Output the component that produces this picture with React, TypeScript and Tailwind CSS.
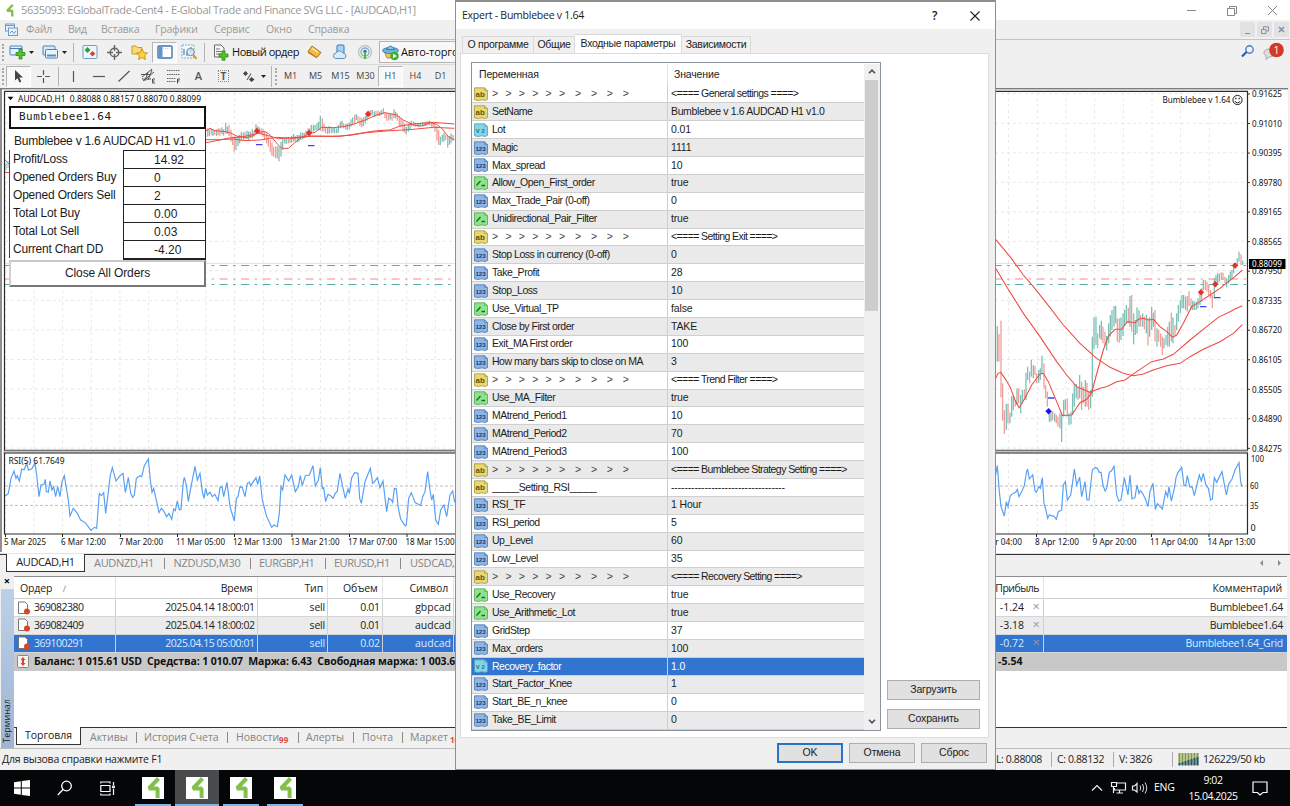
import type { ReactNode } from "react";
import clsx from "clsx";

type ParamKind = "ab" | "num" | "dbl" | "bool";

const ARROWS = "> > > > > > > > > >";

const PARAMS: [ParamKind, string, string][] = [
  ["ab", ARROWS, "<==== General settings ====>"],
  ["ab", "SetName", "Bumblebee v 1.6 AUDCAD H1 v1.0"],
  ["dbl", "Lot", "0.01"],
  ["num", "Magic", "1111"],
  ["num", "Max_spread", "10"],
  ["bool", "Allow_Open_First_order", "true"],
  ["num", "Max_Trade_Pair (0-off)", "0"],
  ["bool", "Unidirectional_Pair_Filter", "true"],
  ["ab", ARROWS, "<==== Setting Exit ====>"],
  ["num", "Stop Loss in currency (0-off)", "0"],
  ["num", "Take_Profit", "28"],
  ["num", "Stop_Loss", "10"],
  ["bool", "Use_Virtual_TP", "false"],
  ["num", "Close by First order", "TAKE"],
  ["num", "Exit_MA First order", "100"],
  ["num", "How many bars skip to close on MA", "3"],
  ["ab", ARROWS, "<==== Trend Filter ====>"],
  ["bool", "Use_MA_Filter", "true"],
  ["num", "MAtrend_Period1", "10"],
  ["num", "MAtrend_Period2", "70"],
  ["num", "MAtrend_Period3", "100"],
  ["ab", ARROWS, "<==== Bumblebee Strategy Setting ====>"],
  ["ab", "_____Setting_RSI_____", "----------------------------------"],
  ["num", "RSI_TF", "1 Hour"],
  ["num", "RSI_period", "5"],
  ["num", "Up_Level", "60"],
  ["num", "Low_Level", "35"],
  ["ab", ARROWS, "<==== Recovery Setting ====>"],
  ["bool", "Use_Recovery", "true"],
  ["bool", "Use_Arithmetic_Lot", "true"],
  ["num", "GridStep", "37"],
  ["num", "Max_orders", "100"],
  ["dbl", "Recovery_factor", "1.0"],
  ["num", "Start_Factor_Knee", "1"],
  ["num", "Start_BE_n_knee", "0"],
  ["num", "Take_BE_Limit", "0"],
];

const SELECTED_PARAM = 32;

const ORDERS = [
  { id: "369082380", time: "2025.04.14 18:00:01", lot: "0.01", symbol: "gbpcad", profit: "-1.24", comment: "Bumblebee1.64" },
  { id: "369082409", time: "2025.04.14 18:00:02", lot: "0.01", symbol: "audcad", profit: "-3.18", comment: "Bumblebee1.64" },
  { id: "369100291", time: "2025.04.15 05:00:01", lot: "0.02", symbol: "audcad", profit: "-0.72", comment: "Bumblebee1.64_Grid" },
];

const STATS = [
  ["Profit/Loss", "14.92"],
  ["Opened Orders Buy", "0"],
  ["Opened Orders Sell", "2"],
  ["Total Lot Buy", "0.00"],
  ["Total Lot Sell", "0.03"],
  ["Current Chart DD", "-4.20"],
];

const PRICES = ["0.91625", "0.91010", "0.90395", "0.89780", "0.89165", "0.88565", "0.87950", "0.87335", "0.86720", "0.86105", "0.85505", "0.84890", "0.84275"];

// bars are "x high low" in thirds of a pixel, r = falling, t = rising
const BARS_LEFT =
  "r23 115 140,t28 118 138,r34 115 135,t39 118 138,r44 120 135,t50 118 138,r55 115 135,r60 115 138,t66 112 133,t71 118 137,t77 98 130,t82 110 132,r87 105 138,r93 120 155,r98 140 165,r103 140 185,t108 140 180,t114 138 168,t119 135 160,t124 125 150,t130 128 150,r135 125 148,t141 122 148,t146 125 150,t151 125 145,t157 118 145,r162 125 140,t168 103 120,r173 108 128,t178 112 130,r184 115 132,r189 118 140,r194 125 150,r200 130 160,r205 140 170,r211 150 185,r216 158 198,r221 170 200,r227 170 205,r232 168 205,t237 170 214,t243 155 200,t248 145 180,t254 145 160,t259 145 162,r265 140 160,t270 145 158,t275 138 158,t281 132 155,r286 138 155,t292 135 157,t297 135 155,t302 127 150,t308 128 148,r313 128 145,t318 122 140,r324 115 135,t329 115 140,t334 105 130,t340 105 125,t345 105 122,t351 100 120,t356 95 120,t361 77 122,r367 85 125,r372 102 125,r377 110 130,t383 112 132,t388 108 130,r394 112 130,t399 112 128,t404 112 130,t410 115 130,t415 105 128,t421 95 115,t426 92 112,r431 100 115,r437 102 118,t442 100 120,t448 98 118,t453 88 110,t458 82 105,r464 75 100,t469 72 90,r474 78 98,r480 82 108,r485 85 112,t490 82 108,t496 78 100,t501 70 92,t507 62 80,r512 60 78,t517 60 75,t523 64 80,r528 62 80,r534 62 78,t539 65 78,t544 60 75,t550 55 72,r555 68 85,r560 70 92,r566 72 92,t571 70 88,r576 72 92,t582 58 85,t587 65 85,r592 70 92,r598 78 108,r603 85 112,r609 90 125,r614 100 128,t619 110 133,t625 102 125,t630 95 118,r635 92 110,t641 95 108,r646 98 110,t652 98 110,r657 100 112,t662 98 108,t668 96 110,r673 96 108,t678 95 108,r684 93 105,t689 92 106,r695 96 110,r700 98 112,r705 100 125,r711 108 152,r716 120 165,t721 140 165,t727 135 155,t732 128 155,r737 135 150,r743 135 173,t748 138 165,t753 130 160,t759 135 152";

const BARS_RIGHT =
  "t22 288 395,r27 312 395,r33 272 502,r38 460 572,r43 540 612,t49 522 600,r54 520 580,t60 548 580,t65 498 560,t70 498 540,r76 510 530,t81 475 525,r86 475 520,t92 495 550,t97 480 520,r103 478 510,t108 428 510,t113 410 450,r119 425 460,t124 390 440,t130 405 445,r135 408 435,r140 430 460,t146 420 458,t151 415 450,t156 377 430,r162 400 475,r167 465 505,r172 485 530,t178 540 575,t183 545 575,r188 543 570,t194 550 575,r199 555 580,r204 560 590,t210 550 595,t215 555 636,t221 510 560,t226 508 540,r232 505 560,t237 550 585,t243 545 583,t248 490 555,t253 463 530,t259 462 505,r264 470 510,t269 435 505,r275 455 540,r280 470 520,t286 450 530,r291 458 530,r296 485 540,t302 480 535,t307 320 500,t312 262 358,t318 260 345,r323 310 355,t329 285 325,t334 272 330,r339 290 340,r345 305 345,t350 318 362,t356 280 340,t361 255 320,t366 240 300,t372 228 290,t377 228 280,r382 265 335,r388 265 338,t393 262 330,t399 250 318,t404 240 285,t409 225 275,r415 233 280,t420 198 290,r425 195 305,t431 250 343,t436 270 315,t441 232 310,t447 240 290,r452 255 290,t458 250 290,r463 260 298,t469 255 310,r474 265 347,t479 262 320,t485 230 300,t490 248 290,r495 240 335,t501 295 350,r506 300 335,r512 310 350,r517 320 375,t522 325 355,t528 315 345,r533 290 350,t538 275 350,r544 248 335,t549 262 340,r555 285 315,t560 250 300,t565 225 275,t571 210 250,t576 195 235,t581 195 235,t587 200 240,r592 198 245,r597 183 228,r603 205 238,t608 212 240,t613 215 240,t619 215 240,t624 205 235,t630 190 225,r635 175 215,t640 150 180,r646 150 180,r651 155 185,r656 165 195,r662 180 205,r667 195 235,t673 145 205,t678 135 170,t683 130 165,t688 130 155,r694 127 150,r699 128 150,r705 140 160,t710 145 172,t716 135 160,t721 125 150,t726 120 145,t731 110 130,t737 100 115,t742 85 105,t747 65 95,r753 73 105,t758 92 105";

const MA_LEFT = [
  "18,122 30,115 45,122 75,125 90,128 110,138 140,143 160,137 175,127 195,125 205,130 235,165 245,175 265,175 280,162 300,145 330,130 345,127 365,112 400,113 430,110 460,103 495,90 530,75 555,68 590,75 610,90 640,105 665,108 690,98 710,103 725,115 745,140 763,150",
  "18,149 60,149 100,147 130,152 180,150 230,142 280,145 320,140 325,138 420,139 460,133 530,122 570,120 600,108 640,102 700,97 763,102",
  "18,158 60,150 80,145 130,140 175,130 205,137 235,146 280,143 330,139 400,139 450,136 500,128 560,123 640,118 700,112 763,115",
];

const MA_RIGHT = [
  "17,28 60,80 100,135 130,170 170,220 220,285 270,340 320,385 360,412 400,430 430,437 460,432 490,420 530,407 570,400 600,380 640,358 690,335 730,310 757,284",
  "17,115 50,170 100,250 150,320 200,395 230,435 260,470 300,487 330,475 350,470 380,455 405,450 440,425 485,395 520,387 550,373 600,330 650,290 685,262 720,245 735,237 757,227",
  "17,445 24,430 32,427 45,445 60,470 75,510 87,533 105,505 125,465 150,432 160,430 175,455 200,515 217,556 245,555 270,518 290,508 305,488 315,450 340,360 355,318 375,298 395,298 412,275 425,277 435,278 445,268 460,265 475,270 490,268 510,290 530,305 548,322 560,315 580,280 605,230 630,215 660,195 690,175 715,155 735,140 757,120",
];

const RSI_LEFT =
  "16,153 25,145 33,100 42,78 48,100 52,92 58,108 65,72 72,75 80,55 85,75 95,72 105,55 110,90 117,155 123,120 132,118 136,103 139,140 145,142 150,108 156,135 161,125 167,155 173,125 180,155 186,110 193,92 200,135 205,165 210,213 220,190 232,205 242,225 255,232 273,256 283,247 290,250 298,145 304,152 311,143 317,205 325,140 331,90 337,68 348,108 360,92 369,85 376,142 385,97 392,145 398,157 403,150 409,100 420,92 425,95 433,62 445,42 451,105 456,142 461,130 470,170 477,203 484,190 492,200 500,215 507,205 515,223 521,192 526,197 532,168 538,195 543,193 550,110 553,97 559,120 565,170 572,130 585,64 592,105 600,85 607,140 612,160 617,130 622,150 630,142 637,155 645,148 654,167 660,128 666,125 671,155 681,112 690,185 703,228 709,160 714,155 720,125 727,128 735,155 742,115 748,112 752,122 768,98 773,118 779,93 787,165 800,215 815,247 822,240 832,245 838,205 843,125 848,135 855,90 866,108 875,90 886,140 895,125 901,92 907,122 916,92 928,90 939,62 946,123 955,105 961,68 967,130 971,128 977,170 984,148 992,152 999,160 1006,145 1012,138 1020,85 1028,125 1036,160 1044,132 1048,145 1055,98 1064,83 1074,85 1079,160 1084,175 1095,110 1103,90 1111,70 1118,115 1125,108 1132,98 1140,128 1149,108 1160,200 1166,160 1174,165 1178,172 1183,130 1189,132 1195,190 1202,222 1215,242 1219,240 1226,160 1234,143 1245,172 1262,182 1268,155 1275,140 1283,80 1290,135 1295,165 1300,148 1307,225 1315,238 1322,195 1332,180 1340,215 1350,150 1358,138 1364,172";

const RSI_RIGHT =
  "17,90 22,62 28,140 33,185 43,213 49,170 54,185 60,155 65,148 77,142 82,133 87,155 95,140 103,122 110,78 113,74 118,102 128,90 135,138 139,142 147,124 151,130 157,98 162,175 167,192 173,220 178,210 192,214 199,223 205,200 215,195 220,120 226,110 232,165 242,150 248,110 253,72 260,120 269,97 275,155 285,110 291,165 297,165 307,75 315,68 322,70 328,82 333,82 339,120 345,138 350,130 358,82 364,78 372,64 380,150 386,168 393,165 403,98 414,150 420,90 426,162 435,158 441,120 447,145 451,137 458,145 466,162 474,185 480,140 489,115 496,193 502,176 517,192 527,140 533,155 537,125 544,168 553,130 558,98 564,82 575,67 582,122 587,122 592,92 599,125 607,127 613,152 620,122 628,90 634,108 640,85 647,118 655,130 662,165 667,162 673,98 680,112 696,80 709,150 716,118 726,102 735,75 747,53 752,110 755,122 758,122";

const DATES: [number, number, string][] = [
  [4, 42, "5 Mar 2025"],
  [61, 45, "6 Mar 12:00"],
  [119, 44, "7 Mar 20:00"],
  [176, 49, "11 Mar 05:00"],
  [233, 49, "12 Mar 13:00"],
  [290.5, 49, "13 Mar 21:00"],
  [348, 49, "17 Mar 07:00"],
  [405.5, 49, "18 Mar 15:00"],
  [978, 44, "7 Apr 04:00"],
  [1035, 44, "8 Apr 12:00"],
  [1092.5, 44, "9 Apr 20:00"],
  [1150, 48, "11 Apr 04:00"],
  [1207.5, 48, "14 Apr 13:00"],
];

function Bars({ data }: { data: string }) {
  return (
    <>
      {data.split(",").map((bar) => {
        const [x, high, low] = bar.slice(1).split(" ").map(Number);
        return <rect key={x} x={x - 2} y={high} width={3.9} height={low - high} fill={bar[0] === "r" ? "#ef9f99" : "#7cc0b8"} />;
      })}
    </>
  );
}

function Diamond({ x, y, color }: { x: number; y: number; color: string }) {
  return <path d={`M${x} ${y - 3.2}L${x + 3.2} ${y}L${x} ${y + 3.2}L${x - 3.2} ${y}Z`} fill={color} />;
}

function Chart() {
  const cols = Array.from({ length: 43 }, (_, i) => 5 + i * 28.667 + 0.3);
  return (
    <svg className="block" width="1290" height="466" viewBox="0 88 1290 466" fontFamily="'Noto Sans', sans-serif" fontSize="9">
      <rect x="0" y="88" width="1290" height="466" fill="#fff" />
      <rect x="0" y="88" width="2" height="464" fill="#8f8f8f" />
      <rect x="0" y="88" width="1288" height="1.4" fill="#7c7c7c" />
      <rect x="1288" y="88" width="2" height="466" fill="#efefef" />
      <g stroke="#e8e8e8" strokeWidth="1" strokeDasharray="3 3">
        {cols.map((x) => (
          <path key={x} d={`M${x} 92V533`} />
        ))}
        {PRICES.map((p, i) => (
          <path key={p} d={`M5 ${93.7 + i * 29.53}H1247`} />
        ))}
      </g>
      <path d="M5 486H1247M5 505.4H1247" stroke="#bdbdbd" strokeDasharray="3 2" fill="none" />
      <path d="M5 263.5H1247" stroke="#e3e3e8" fill="none" />
      <g fill="none" strokeWidth="1.2" strokeDasharray="8 5.5 2.5 5.5">
        <path d="M4.600 265.5H1247" stroke="#55aea2" />
        <path d="M4.600 279H1247" stroke="#ec8e89" />
        <path d="M4.600 284.5H1247" stroke="#55aea2" />
      </g>

      <g transform="translate(200 90) scale(.33333)">
        <Bars data={BARS_LEFT} />
        {MA_LEFT.map((p) => (
          <polyline key={p} points={p} fill="none" stroke="#ee4b42" strokeWidth="3" />
        ))}
      </g>
      <path d="M5 160L9 164M5 172.5H10" stroke="#ee4b42" fill="none" />
      <path d="M6 163V170M8 161V168" stroke="#7cc0b8" fill="none" />
      <Diamond x={257} y={131} color="#e33227" />
      <Diamond x={309} y={133} color="#e33227" />
      <Diamond x={368} y={114} color="#e33227" />
      <path d="M256 144.7H262.500M308 145.600H314.500" stroke="#4040f0" strokeWidth="1.3" fill="none" />

      <g transform="translate(990 230) scale(.33333)">
        <Bars data={BARS_RIGHT} />
        {MA_RIGHT.map((p) => (
          <polyline key={p} points={p} fill="none" stroke="#ee4b42" strokeWidth="3.2" />
        ))}
      </g>
      <Diamond x={1201} y={292.300} color="#e33227" />
      <Diamond x={1215.300} y={284.300} color="#e33227" />
      <Diamond x={1235} y={265.500} color="#e33227" />
      <Diamond x={1048.600} y={411.300} color="#1414f0" />
      <path d="M1048 398H1054.500M1200 306.600H1206.500M1214 297.600H1220.500" stroke="#4040f0" strokeWidth="1.3" fill="none" />

      <g transform="translate(0 445) scale(.33333)">
        <polyline points={RSI_LEFT} fill="none" stroke="#559ff5" strokeWidth="3.500" />
      </g>
      <g transform="translate(990 445) scale(.33333)">
        <polyline points={RSI_RIGHT} fill="none" stroke="#559ff5" strokeWidth="3.500" />
      </g>

      {/* frames */}
      <rect x="3" y="449.500" width="1245" height="4" fill="#d9d9d9" />
      <path d="M4 450.500H1248" stroke="#777" strokeWidth="1.6" />
      <path d="M4.500 91.300H1247.500V450M4.500 91.300V450M4.500 534V453H1247.500V534Z" fill="none" stroke="#2a2a2a" strokeWidth="1.2" />
      {PRICES.map((p, i) => (
        <g key={p}>
          <path d={`M1247 ${94 + i * 29.53}H1250`} stroke="#333" />
          <text x="1252" y={97.200 + i * 29.53} textLength="30" lengthAdjust="spacingAndGlyphs" fill="#111">{p}</text>
        </g>
      ))}
      <rect x="1249" y="259" width="36.500" height="10" fill="#000" />
      <text x="1252" y="267.300" textLength="30" lengthAdjust="spacingAndGlyphs" fill="#fff">0.88099</text>
      <g fill="#111">
        <text x="1251" y="462.300" textLength="13" lengthAdjust="spacingAndGlyphs">100</text>
        <text x="1250" y="489.300" textLength="8.500" lengthAdjust="spacingAndGlyphs">60</text>
        <text x="1250" y="508.800" textLength="8.500" lengthAdjust="spacingAndGlyphs">35</text>
        <text x="1250.500" y="531.300">0</text>
        <text x="18" y="101.500" textLength="183" lengthAdjust="spacingAndGlyphs" xmlSpace="preserve">AUDCAD,H1  0.88088 0.88157 0.88070 0.88099</text>
        <text x="8.500" y="464" textLength="56" lengthAdjust="spacingAndGlyphs">RSI(5) 61.7649</text>
        <text x="1162.500" y="102.500" textLength="68" lengthAdjust="spacingAndGlyphs">Bumblebee v 1.64</text>
        {DATES.map(([x, w, label]) => (
          <text key={label} x={x} y="545.300" textLength={w} lengthAdjust="spacingAndGlyphs">{label}</text>
        ))}
      </g>
      {DATES.map(([x, , label]) => (
        <path key={label} d={`M${x + 1.500} 534V537`} stroke="#222" />
      ))}
      <path d="M7.500 96.800H13.500L10.500 100.300Z" fill="#111" />
      <g stroke="#222" fill="none">
        <circle cx="1237.500" cy="100" r="4.600" />
        <path d="M1234.800 101.500Q1237.500 104.500 1240.200 101.500" />
        <path d="M1235.800 97.800V99.300M1239.200 97.800V99.300" strokeWidth="1.300" />
      </g>
      <path d="M0 553.500H1290" stroke="#e4e4e4" />
    </svg>
  );
}

function ExpertPanel() {
  return (
    <div className="absolute left-[9px] top-[18px] w-[197px] bg-white font-['Liberation_Sans',sans-serif] text-[12px] text-[#1c1c1c]">
      <div className="flex h-[23px] items-center border-2 border-[#111] pl-[8px] font-['DejaVu_Sans_Mono',monospace] text-[11px] tracking-[0.500px]">Bumblebee1.64</div>
      <div className="flex h-[20.500px] items-center border-r border-[#333] pl-[5px] pt-[3px] tracking-[-0.240px]">
        <span className="whitespace-nowrap">Bumblebee v 1.6 AUDCAD H1 v1.0</span>
      </div>
      {STATS.map(([label, value]) => (
        <div key={label} className="flex h-[18px]">
          <div className="w-[114px] whitespace-nowrap border-l border-[#444] pl-[3px] leading-[18px] tracking-[-0.200px]">{label}</div>
          <div className="flex-1 border-l-[1.500px] border-r border-t-[1.500px] border-[#222] pl-[30px] pt-px leading-[17px]">{value}</div>
        </div>
      ))}
      <div className="ml-[114px] h-[2px] bg-[#222]" />
      <div className="flex h-[27px] items-center justify-center border-2 border-b-[#777] border-l-[#d0d0d0] border-r-[#777] border-t-[#c8c8c8] bg-white tracking-[-0.100px]">
        Close All Orders
      </div>
    </div>
  );
}

function Cell({ pressed, wide, children }: { pressed?: boolean; wide?: boolean; children?: ReactNode }) {
  return (
    <div
      className={clsx(
        "flex h-[21px] shrink-0 items-center justify-center",
        wide ? "w-[33px]" : "w-[25px]",
        pressed && "border border-[#b5b5b5] border-b-white border-r-white bg-[#f8f8f8]",
      )}
    >
      {children}
    </div>
  );
}

const Grip = () => <div className="h-[17px] w-[3px] shrink-0 border-l-2 border-dotted border-[#a8a8a8]" />;
const Sep = () => <div className="mx-[2px] h-[19px] w-px shrink-0 bg-[#b4b4b4]" />;

const Caret = ({ className }: { className?: string }) => (
  <svg className={clsx("shrink-0", className)} width="5" height="3" viewBox="0 0 5 3">
    <path d="M0 0H5L2.500 3Z" fill="#222" />
  </svg>
);

function MainToolbar() {
  return (
    <div className="flex h-[25px] items-center border-t border-[#c4c4c4] bg-[#f0f0f0] pl-[2px] text-[11px] text-[#111]">
      <Grip />
      <Cell wide>
        <svg width="17" height="16" viewBox="0 0 17 16">
          <rect x="1" y="2" width="12" height="9" rx="1" fill="#e8f2fb" stroke="#4a80b5" />
          <path d="M1 4.500H13" stroke="#4a80b5" />
          <path d="M10 5H13V8.500H16V11.500H13V15H10V11.500H7V8.500H10Z" fill="#4fc22e" stroke="#2e8c18" strokeWidth=".8" />
        </svg>
        <Caret className="ml-[3px]" />
      </Cell>
      <Cell wide>
        <svg width="17" height="16" viewBox="0 0 17 16">
          <rect x="1" y="2" width="12" height="9" rx="1" fill="#d8e9f8" stroke="#4a80b5" />
          <rect x="3.500" y="5.500" width="12" height="8.500" rx="1" fill="#e9f3fb" stroke="#4a80b5" />
          <path d="M5 11.500H14" stroke="#5b8ec0" strokeWidth="2" />
        </svg>
        <Caret className="ml-[3px]" />
      </Cell>
      <Sep />
      <div className="ml-px flex">
        <Cell>
          <svg width="16" height="16" viewBox="0 0 16 16">
            <rect x="1" y="1.500" width="14" height="13" rx="1" fill="#eef6fd" stroke="#6f9fca" />
            <path d="M5.500 3L8.500 6L5.500 9L2.500 6Z" fill="#2f9d3c" />
            <path d="M10.500 7L13.300 9.800L10.500 12.600L7.700 9.800Z" fill="#dd3f27" />
          </svg>
        </Cell>
      </div>
      <Cell>
        <svg width="15" height="15" viewBox="0 0 15 15" fill="none" stroke="#666" strokeWidth="1.400">
          <circle cx="7.500" cy="7.500" r="4.300" />
          <path d="M7.500 0V6M7.500 9V15M0 7.500H6M9 7.500H15" />
        </svg>
      </Cell>
      <Cell>
        <svg width="17" height="16" viewBox="0 0 17 16">
          <path d="M1 2H5L6.500 3.500H11V10H1Z" fill="#f7d978" stroke="#c79a2e" />
          <path d="M11 5L12.600 8.600L16.500 9L13.600 11.600L14.500 15.500L11 13.500L7.500 15.500L8.400 11.600L5.500 9L9.400 8.600Z" fill="#fbd43b" stroke="#c28c14" strokeWidth=".9" />
        </svg>
      </Cell>
      <Cell pressed>
        <svg width="16" height="14" viewBox="0 0 16 14">
          <rect x="1" y="1" width="14" height="12" rx="1" fill="#fff" stroke="#3f74ad" strokeWidth="1.400" />
          <rect x="2" y="2" width="3.500" height="10" fill="#5d95cf" />
          <path d="M6 3.500H14" stroke="#b9d3ea" strokeDasharray="1 1" />
        </svg>
      </Cell>
      <Cell>
        <svg width="17" height="16" viewBox="0 0 17 16">
          <rect x="1" y="1" width="12" height="13" fill="#f3f8fc" stroke="#8aa9c6" strokeDasharray="2 1" />
          <path d="M3 11V5M6 12V7M10 8V3" stroke="#6c9cc9" strokeWidth="1.500" />
          <circle cx="9.500" cy="8" r="3.700" fill="#cfe5f5" fillOpacity=".8" stroke="#6d8eae" />
          <path d="M12 11L15.500 14.800" stroke="#d89b1f" strokeWidth="2" />
        </svg>
      </Cell>
      <Sep />
      <Cell>
        <svg className="ml-[2px]" width="16" height="17" viewBox="0 0 16 17">
          <path d="M1.500 1H8L11 4V13H1.500Z" fill="#f7f7f7" stroke="#6a6a6a" />
          <path d="M3 5H7M3 7.500H9M3 10H8" stroke="#777" />
          <path d="M9 7H12V10H15V13H12V16.200H9V13H6V10H9Z" fill="#4fc22e" stroke="#2e8c18" strokeWidth=".8" />
        </svg>
      </Cell>
      <span className="w-[70px] shrink-0 whitespace-nowrap tracking-[-0.450px]">Новый ордер</span>
      <Cell>
        <svg width="15" height="14" viewBox="0 0 15 14">
          <path d="M5 1L14 7.500L10 12.500L1 6.500Z" fill="#f1bb3c" stroke="#a8741a" />
          <path d="M1 6.500L10 12.500V13.500L1 8Z" fill="#b97d17" />
          <path d="M5 3L11 7.300" stroke="#fbe3a0" strokeWidth="1.600" />
        </svg>
      </Cell>
      <Cell>
        <svg width="16" height="16" viewBox="0 0 16 16">
          <rect x="5" y="1" width="7" height="9" rx="1" fill="#a9d3f5" stroke="#2d78c1" />
          <path d="M3.500 14.500A2.800 2.800 0 0 1 4 9A4 4 0 0 1 11 9A3 3 0 0 1 12.500 14.500Z" fill="#dcebf8" stroke="#5b8cba" />
        </svg>
      </Cell>
      <Cell>
        <svg width="16" height="16" viewBox="0 0 16 16" fill="none">
          <circle cx="8" cy="8" r="6.500" stroke="#b3cfb5" strokeWidth="1.400" />
          <circle cx="8" cy="8" r="4" stroke="#7fa9c9" strokeWidth="1.300" />
          <circle cx="8" cy="7.500" r="1.800" fill="#3a78b8" />
          <path d="M8 8V15" stroke="#4fae3c" strokeWidth="1.800" />
        </svg>
      </Cell>
      <div className="ml-[2px] flex h-[22px] w-[104px] shrink-0 items-center border border-[#b5b5b5] bg-[#f8f8f8] pl-[2px]">
        <svg className="shrink-0" width="18" height="17" viewBox="0 0 18 17">
          <path d="M2 7H15L12 14H5Z" fill="#f3c94c" stroke="#b98f22" />
          <ellipse cx="8.500" cy="6.500" rx="8" ry="3" fill="#6fb3de" stroke="#3c7fae" />
          <path d="M4.500 5.500Q8.500 -1.500 12.500 5.500Z" fill="#8cc7ea" stroke="#3c7fae" />
          <circle cx="12.500" cy="12" r="4.300" fill="#3fae34" />
          <path d="M11 9.700L15 12L11 14.300Z" fill="#fff" />
        </svg>
        <span className="ml-px whitespace-nowrap tracking-[-0.100px]">Авто-торговля</span>
      </div>
    </div>
  );
}

function DrawToolbar() {
  return (
    <div className="flex h-[23px] items-center border-t border-[#dadada] bg-[#f0f0f0] pl-[2px] text-[9px] text-[#444]">
      <Grip />
      <div className="ml-px flex">
        <Cell pressed>
          <svg width="10" height="13" viewBox="0 0 10 13">
            <path d="M1 0V10.500L3.500 8.300L5.500 12.500L7.300 11.700L5.400 7.600H9Z" fill="#444" />
          </svg>
        </Cell>
      </div>
      <Cell>
        <svg width="15" height="15" viewBox="0 0 15 15" stroke="#555" strokeWidth="1.200">
          <path d="M7.500 1V6M7.500 9V14M1 7.500H6M9 7.500H14" />
        </svg>
      </Cell>
      <Sep />
      <Cell>
        <svg width="3" height="13" viewBox="0 0 3 13"><path d="M1.500 1V12" stroke="#555" strokeWidth="1.200" /></svg>
      </Cell>
      <Cell>
        <svg width="12" height="3" viewBox="0 0 12 3"><path d="M0 1.500H12" stroke="#555" strokeWidth="1.200" /></svg>
      </Cell>
      <Cell>
        <svg width="12" height="12" viewBox="0 0 12 12"><path d="M.5 11.500L11.500 1" stroke="#555" strokeWidth="1.200" /></svg>
      </Cell>
      <Cell>
        <svg width="16" height="16" viewBox="0 0 16 16" stroke="#555" fill="none">
          <path d="M1 9L11 1M2 13L13 4M0 6.500H9M1 11H10M4 13L7 4M7 12L11 2" />
          <path d="M14 11H11.500V15H14M11.500 13H13.500" />
        </svg>
      </Cell>
      <Cell>
        <svg width="16" height="16" viewBox="0 0 16 16" stroke="#666" fill="none">
          <path d="M1 2.500H14M1 6.500H14M1 10.500H10M1 13.500H10" strokeDasharray="1.500 .7" />
          <path d="M14 11H11.500V15.500M11.500 13H13.500" stroke="#444" />
        </svg>
      </Cell>
      <Cell><span className="text-[11px] font-semibold text-[#555]">A</span></Cell>
      <Cell>
        <span className="flex h-[12px] w-[11px] items-center justify-center border border-dotted border-[#888] text-[10px] font-bold text-[#555]">T</span>
      </Cell>
      <Cell>
        <svg width="13" height="13" viewBox="0 0 13 13" fill="#444">
          <path d="M3.500 1L6 3.500L3.500 6L1 3.500ZM9.500 7L12.500 9.500L9.500 12L7 9.500Z" />
          <path d="M5 10L9 3.500" stroke="#666" strokeWidth="1.200" />
        </svg>
      </Cell>
      <Caret />
      <div className="ml-[5px] h-[21px] w-px shrink-0 bg-[#b4b4b4]" />
      <div className="ml-[3px]"><Grip /></div>
      <Cell>M1</Cell>
      <Cell>M5</Cell>
      <Cell>M15</Cell>
      <Cell>M30</Cell>
      <Cell pressed>H1</Cell>
      <Cell>H4</Cell>
      <Cell>D1</Cell>
    </div>
  );
}

const ROW_GRID = "grid grid-cols-[101.5px_142px_70.5px_54.5px_71.5px_590px_1fr] items-center";

function OrderIcon() {
  return (
    <svg width="14" height="14" viewBox="0 0 14 14">
      <path d="M1.500 1H8L10.500 3.500V12.500H1.500Z" fill="#fff" stroke="#777" />
      <circle cx="10" cy="10.500" r="3" fill="#d9452b" />
    </svg>
  );
}

const TabDivider = () => <i className="h-[11px] w-px shrink-0 bg-[#8a8a8a]" />;

function Terminal() {
  return (
    <div className="flex h-[175px] bg-[#f0f0f0] pt-[3px]">
      <div className="flex w-[14px] shrink-0 flex-col items-center">
        <div className="h-[13px] text-[11px] font-bold leading-[9px]">×</div>
        <div className="flex w-[13px] flex-1 items-start justify-center bg-linear-to-b from-[#bdd0e8] to-[#9db4d2] pt-[110px] text-[9px] text-[#222]">
          <span className="rotate-180 whitespace-nowrap [writing-mode:vertical-rl]">Терминал</span>
        </div>
      </div>
      <div className="mr-[3px] flex flex-1 flex-col border-t border-[#8e8e8e] bg-white text-[10.500px] text-[#222]">
        <div className={clsx(ROW_GRID, "h-[22px] border-b border-[#cfcfcf] text-right tracking-[-0.150px] [&>*]:h-full [&>*]:border-r [&>*]:border-[#e2e2e2] [&>*]:pr-[4px] [&>*]:leading-[22px]")}>
          <div className="pl-[6px] text-left">Ордер <span className="ml-[8px] text-[9px] text-[#888]">∕</span></div>
          <div>Время</div>
          <div>Тип</div>
          <div>Объем</div>
          <div className="!pr-[5px]">Символ</div>
          <div className="tracking-[-0.500px]">Прибыль</div>
          <div className="!border-r-0 !pr-[5px]">Комментарий</div>
        </div>
        {ORDERS.map((o, i) => (
          <div
            key={o.id}
            className={clsx(
              ROW_GRID,
              "h-[17.900px] border-b border-[#d5d5d5] text-right [&>*]:h-full [&>*]:border-r [&>*]:border-[#d0d0d0] [&>*]:pr-[2px] [&>*]:leading-[17px]",
              i === 1 && "bg-[#ebebeb]",
              i === 2 && "bg-[#3175d1] text-[#dcebff]",
            )}
          >
            <div className="flex items-center gap-[3px] pl-[3px] tracking-[-0.500px]"><OrderIcon />{o.id}</div>
            <div className="tracking-[-0.450px]">{o.time}</div>
            <div className="tracking-[-0.200px]">sell</div>
            <div className="tracking-[-0.400px]">{o.lot}</div>
            <div>{o.symbol}</div>
            <div>{o.profit}<span className="ml-[8px] mr-[1px] inline-block w-[8px] text-[13px] leading-[10px] text-[#999]">×</span></div>
            <div className="!border-r-0 !pr-[4px] tracking-[-0.280px]">{o.comment}</div>
          </div>
        ))}
        <div className="flex h-[18px] items-center bg-[#c8c8c8] pl-[3px] font-bold text-[#111]">
          <svg width="12" height="13" viewBox="0 0 12 13">
            <rect x=".5" y=".5" width="11" height="12" rx="1" fill="#f5f5f5" stroke="#888" />
            <path d="M6 2L8.500 5H7V8H8.500L6 11L3.500 8H5V5H3.500Z" fill="#d9452b" />
          </svg>
          <span className="ml-[5px] w-[964px] overflow-hidden whitespace-pre tracking-[-0.120px]">Баланс: 1 015.61 USD  Средства: 1 010.07  Маржа: 6.43  Свободная маржа: 1 003.64</span>
          <span>-5.54</span>
        </div>
        <div className="flex-1" />
        <div className="flex h-[21px] items-start border-t border-[#333] bg-[#f0f0f0] text-[10.500px] text-[#858585]">
          <div className="-mt-px ml-[2px] flex h-[18px] w-[65px] items-center justify-center border-b-[1.500px] border-l border-r-[1.500px] border-[#333] bg-white text-[#222]">Торговля</div>
          <div className="flex items-center whitespace-nowrap leading-[18px]">
            <span className="ml-[9px] w-[46px]">Активы</span><TabDivider />
            <span className="ml-[7px] w-[83px] tracking-[-0.080px]">История Счета</span><TabDivider />
            <span className="ml-[8px] w-[62px]">Новости<sub className="text-[8px] font-bold text-[#e04848]">99</sub></span><TabDivider />
            <span className="ml-[7px] w-[47px]">Алерты</span><TabDivider />
            <span className="ml-[8px] w-[40px]">Почта</span><TabDivider />
            <span className="ml-[7px]">Маркет<sub className="ml-[2px] text-[8px] font-bold text-[#e04848]">103</sub></span>
          </div>
        </div>
      </div>
    </div>
  );
}

function Logo({ size }: { size: number }) {
  return (
    <svg width={size} height={size} viewBox="0 0 22 22" fill="none" stroke="#85bf4b" strokeWidth="4" strokeLinejoin="bevel">
      <path d="M16.500 1.500L7 11.500H15.600V21" />
    </svg>
  );
}

function MainWindow() {
  return (
    <div className="flex h-[770px] flex-col bg-[#f0f0f0]">
      <div className="flex h-[20px] shrink-0 items-center bg-white pl-[3px] text-[11px] text-[#999]">
        <Logo size={13} />
        <span className="ml-[5px] flex-1 whitespace-nowrap tracking-[-0.380px]">5635093: EGlobalTrade-Cent4 - E-Global Trade and Finance SVG LLC - [AUDCAD,H1]</span>
        <svg width="104" height="12" viewBox="0 0 104 12" fill="none" stroke="#888">
          <path d="M5 6.500H14M86 2L95 11M95 2L86 11" />
          <path d="M45.500 4.500H52.500V11.500H45.500ZM47.500 4V2.500H54.500V9.500H53" />
        </svg>
        <span className="w-[4px]" />
      </div>
      <div className="flex h-[19px] shrink-0 items-center bg-[#f0f0f0] pl-[5px] text-[10.500px] text-[#9a9a9a]">
        <svg width="13" height="13" viewBox="0 0 13 13" fill="#e8f1fb" stroke="#6d9bd0">
          <rect x=".5" y="1" width="9" height="7" />
          <path d="M.5 2.500H9.500" />
          <rect x="3.500" y="5" width="9" height="7.500" />
          <path d="M5 10L7 8L9 10.500L11 8" fill="none" />
        </svg>
        <div className="ml-[8px] flex flex-1 tracking-[-0.200px] [&>span]:whitespace-nowrap">
          <span className="w-[42px]">Файл</span>
          <span className="w-[33px]">Вид</span>
          <span className="w-[54px]">Вставка</span>
          <span className="w-[59px]">Графики</span>
          <span className="w-[52px]">Сервис</span>
          <span className="w-[42px]">Окно</span>
          <span>Справка</span>
        </div>
        <div className="mr-[1px] flex gap-[2px]">
          <span className="flex h-[15px] w-[15px] items-end justify-center bg-[#e2e2e2] pb-[3px]"><span className="h-[1.500px] w-[5px] bg-[#8392a3]" /></span>
          <span className="flex h-[15px] w-[15px] items-center justify-center bg-[#e2e2e2]">
            <svg width="8" height="8" viewBox="0 0 8 8" fill="none" stroke="#8392a3"><path d="M.5 3.500H5V7.500H.5ZM2.500 3V.8H7.500V5H5.500" /></svg>
          </span>
          <span className="flex h-[15px] w-[15px] items-center justify-center bg-[#e2e2e2]">
            <svg width="7" height="7" viewBox="0 0 7 7" stroke="#8392a3" strokeWidth="1.600"><path d="M1 1L6 6M6 1L1 6" /></svg>
          </span>
        </div>
      </div>
      <div className="flex h-[49px] shrink-0">
        <div className="flex w-[500px] flex-col">
          <MainToolbar />
          <DrawToolbar />
        </div>
        <div className="flex flex-1 items-start justify-end border-t border-[#c4c4c4] bg-[#f0f0f0] pr-[6px] pt-[2px]">
          <svg width="44" height="20" viewBox="0 0 44 20" fill="none">
            <circle cx="9.500" cy="7.500" r="3.700" stroke="#4a75cf" strokeWidth="1.400" fill="#eef4ff" />
            <path d="M6.500 10L2 14.500" stroke="#2f56b5" strokeWidth="2.200" />
            <path d="M24 11.500a5.500 4 0 1 1 8 3l-3 .5-3 2.500v-3.500z" fill="#dedede" stroke="#aaa" />
            <circle cx="36.500" cy="8" r="7.300" fill="#d23a25" />
            <text x="36.500" y="11.800" fontSize="10.500" textAnchor="middle" fill="#fff">1</text>
          </svg>
        </div>
      </div>
      <div className="relative h-[466px] shrink-0">
        <Chart />
        <ExpertPanel />
      </div>
      <div className="flex h-[19px] shrink-0 items-start border-t border-[#333] bg-[#f0f0f0] text-[11px] text-[#858585]">
        <div className="-mt-px ml-[6px] flex h-[18px] w-[79px] items-center justify-center border-x border-b-[1.500px] border-[#333] bg-white pb-px tracking-[-0.400px] text-[#222]">AUDCAD,H1</div>
        <div className="flex flex-1 items-center whitespace-nowrap leading-[16px] tracking-[-0.300px]">
          <span className="ml-[9px] w-[69.500px]">AUDNZD,H1</span><TabDivider />
          <span className="ml-[9px] w-[76px]">NZDUSD,M30</span><TabDivider />
          <span className="ml-[8.500px] w-[65.500px] tracking-[-0.500px]">EURGBP,H1</span><TabDivider />
          <span className="ml-[8.500px] w-[66px] tracking-[-0.500px]">EURUSD,H1</span><TabDivider />
          <span className="ml-[9px]">USDCAD,H1</span>
        </div>
        <svg className="mr-[7px] mt-[5px]" width="24" height="6" viewBox="0 0 24 6" fill="#888">
          <path d="M4 0V6L1 3ZM19 0V6L22 3Z" />
        </svg>
      </div>
      <Terminal />
      <div className="flex flex-1 items-center border-t border-[#bdbdbd] bg-[#f0f0f0] pl-[2px] text-[10.500px] tracking-[-0.380px] text-[#222]">
        <span className="w-[994px] tracking-[-0.200px]">Для вызова справки нажмите F1</span>
        <span className="w-[55px] whitespace-nowrap">L: 0.88008</span>
        <span className="w-[62px] whitespace-nowrap border-l border-[#aaa] pl-[5px]">C: 0.88132</span>
        <span className="w-[59px] whitespace-nowrap border-l border-[#aaa] pl-[5px]">V: 3826</span>
        <span className="flex items-center whitespace-nowrap border-l border-[#aaa] pl-[5px]">
          <svg className="mr-[4px]" width="21" height="13" viewBox="0 0 21 13">
            <path d="M1.500 0V12M4.500 0V12M7.500 0V12M10.500 0V12M13.500 0V12M16.500 0V12M19.500 0V12" stroke="#7d9a3a" strokeWidth="2" />
            <path d="M1.500 10V12.500M4.500 9V12.500M7.500 8V12.500M10.500 7V12.500M13.500 6V12.500M16.500 5V12.500M19.500 4V12.500" stroke="#2c5577" strokeWidth="2" />
          </svg>
          126229/50 kb
        </span>
      </div>
    </div>
  );
}

function ParamIcon({ kind }: { kind: ParamKind }) {
  const fill = { ab: "#e6d777", num: "#8fb5e4", dbl: "#86d3e3", bool: "#8fe38f" }[kind];
  const line = { ab: "#a89735", num: "#4878b5", dbl: "#4ba3b8", bool: "#4cab4c" }[kind];
  return (
    <svg className="shrink-0" width="14" height="14" viewBox="0 0 14 14" fontFamily="'Liberation Sans', sans-serif" fontWeight="bold">
      <path d="M.5 .8H10.500L13.500 3.500V12.500L11 13.500L8 12.800L4 13.500L.5 12.800Z" fill={fill} stroke={line} strokeWidth=".8" />
      <path d="M10.500 .8V3.500H13.500" fill="none" stroke={line} strokeWidth=".6" />
      {kind === "ab" && <text x="1.500" y="9.800" fontSize="8" fill="#5f5410">ab</text>}
      {kind === "num" && <text x="1.600" y="9.600" fontSize="6.200" fill="#153a75" textLength="10">123</text>}
      {kind === "dbl" && <text x="1.800" y="9.500" fontSize="6" fill="#187a92" textLength="9">V2</text>}
      {kind === "bool" && <path d="M2.500 9.500L6.500 5M7.500 9.500H11" stroke="#176e17" strokeWidth="1.300" />}
    </svg>
  );
}

function ParamName({ name }: { name: string }) {
  if (name === ARROWS) {
    return (
      <span className="whitespace-nowrap text-[#444]">
        <span className="[word-spacing:4.350px]">{name.slice(0, 11)}</span>
        <span className="ml-[9.800px] [word-spacing:6.900px]">{name.slice(12)}</span>
      </span>
    );
  }
  return <span className="whitespace-nowrap tracking-[-0.480px]">{name}</span>;
}

function valueTracking(value: string) {
  if (value.startsWith("<=")) return "tracking-[-0.580px]";
  if (value.startsWith("Bumblebee")) return "tracking-[-0.370px]";
  return "tracking-[-0.150px]";
}

const ScrollArrow = ({ up }: { up?: boolean }) => (
  <div className="flex h-[15.500px] items-center justify-center">
    <svg width="8" height="5" viewBox="0 0 8 5" fill="none" stroke="#505050" strokeWidth="1.600">
      <path d={up ? "M1 4.200L4 1.200L7 4.200" : "M1 .8L4 3.800L7 .8"} />
    </svg>
  </div>
);

function DialogButton({ children, primary }: { children: ReactNode; primary?: boolean }) {
  return (
    <button
      className={clsx(
        "flex h-[20px] items-center justify-center bg-[#e1e1e1] tracking-[-0.150px]",
        primary ? "border-2 border-[#2a72c4]" : "border border-[#adadad]",
      )}
    >
      {children}
    </button>
  );
}

function ExpertDialog() {
  return (
    <div className="absolute left-[455px] top-0 flex h-[770px] w-[541px] flex-col border border-t-2 border-[#8f8f8f] bg-[#f0f0f0] font-['Liberation_Sans',sans-serif] text-[10.500px] text-[#1c1c1c]">
      <div className="flex h-[27px] shrink-0 items-center bg-white pl-[6px] font-['Open_Sans',sans-serif] text-[10.500px]">
        <span className="flex-1 tracking-[-0.240px]">Expert - Bumblebee v 1.64</span>
        <span className="w-[38px] text-[12px] font-semibold">?</span>
        <svg className="mr-[15px]" width="10" height="10" viewBox="0 0 10 10" stroke="#222" strokeWidth="1.100"><path d="M.5 .5L9.500 9.500M9.500 .5L.5 9.500" /></svg>
      </div>
      <div className="flex h-[24px] shrink-0 items-end pl-[6px] tracking-[-0.300px] [&>div]:flex [&>div]:items-center [&>div]:justify-center [&>div]:whitespace-nowrap [&>div]:border [&>div]:border-b-0 [&>div]:border-[#d9d9d9]">
        <div className="h-[17px] w-[72px]">О программе</div>
        <div className="h-[17px] w-[41px] !border-l-0">Общие</div>
        <div className="-mb-px h-[20px] w-[107px] !border-l-0 bg-white pb-px">Входные параметры</div>
        <div className="h-[17px] w-[69px] !border-l-0">Зависимости</div>
      </div>
      <div className="ml-[4px] mr-[6px] flex h-[685px] shrink-0 border border-[#dcdcdc] bg-white pl-[10px] pt-[8px]">
        <div className="flex h-[668.500px] w-[410px] border-[1.500px] border-[#8a929c] bg-white pt-px">
          <div className="flex flex-1 flex-col">
            <div className="flex h-[21.500px] items-center tracking-[-0.150px]">
              <span className="h-full w-[196px] border-r border-[#e2e2e2] pl-[7px] leading-[21px]">Переменная</span>
              <span className="pl-[6px]">Значение</span>
            </div>
            {PARAMS.map(([kind, name, value], i) => (
              <div
                key={i}
                className={clsx(
                  "flex h-[17.900px] shrink-0 items-center border-b border-[#cfcfcf]",
                  i === SELECTED_PARAM ? "bg-[#3175d1] text-white" : i % 2 === 1 ? "bg-[#eaeaea]" : "bg-white",
                )}
              >
                <div className="flex h-full w-[196px] items-center gap-[4px] border-r border-[#cfcfcf] pl-[2px]">
                  <ParamIcon kind={kind} />
                  <ParamName name={name} />
                </div>
                <span className={clsx("whitespace-nowrap pl-[3px]", valueTracking(value))}>{value}</span>
              </div>
            ))}
          </div>
          <div className="flex w-[16px] flex-col bg-[#f0f0f0]">
            <ScrollArrow up />
            <div className="ml-px h-[231px] w-[13px] bg-[#cdcdcd]" />
            <div className="flex-1" />
            <ScrollArrow />
          </div>
        </div>
        <div className="ml-[6px] mt-[618px] flex w-[93px] flex-col gap-[9px]">
          <DialogButton>Загрузить</DialogButton>
          <DialogButton>Сохранить</DialogButton>
        </div>
      </div>
      <div className="flex flex-1 items-start justify-end gap-[6px] pr-[8px] pt-[5px] [&>button]:w-[66px]">
        <DialogButton primary>OK</DialogButton>
        <DialogButton>Отмена</DialogButton>
        <DialogButton>Сброс</DialogButton>
      </div>
    </div>
  );
}

function Taskbar() {
  return (
    <div className="flex h-[36px] items-center bg-[#050608] text-[10.500px] text-white">
      <svg className="ml-[14px]" width="16" height="16" viewBox="0 0 16 16" fill="#fff">
        <path d="M0 2.200L6.800 1.200V7.500H0ZM7.800 1L16 0V7.500H7.800ZM0 8.500H6.800V14.800L0 13.800ZM7.800 8.500H16V16L7.800 14.900Z" />
      </svg>
      <svg className="ml-[27px]" width="16" height="16" viewBox="0 0 16 16" fill="none" stroke="#fff" strokeWidth="1.300">
        <circle cx="9.500" cy="6" r="4.800" />
        <path d="M6 9.500L.8 15" />
      </svg>
      <svg className="ml-[27px]" width="16" height="15" viewBox="0 0 16 15" fill="none" stroke="#fff" strokeWidth="1.200">
        <path d="M.8 4.500H10V10.500H.8ZM.8 2.500V1H10V2.500M.8 12.500V14H10V12.500M13.500 1V4M13.500 8V14" />
        <circle cx="13.500" cy="5.800" r="1" />
      </svg>
      <div className="ml-[15px] flex h-full">
        {[0, 1, 2, 3].map((i) => (
          <div key={i} className={clsx("flex h-full w-[44px] flex-col items-center justify-between pt-[7px]", i === 1 && "bg-[#4a4b4d]")}>
            <span className="bg-white"><Logo size={22} /></span>
            <span className={clsx("h-[2px] bg-[#7db7e8]", i === 1 ? "w-full" : "w-[36px]")} />
          </div>
        ))}
      </div>
      <div className="flex-1" />
      <svg width="50" height="14" viewBox="0 0 50 14" fill="none" stroke="#eee" strokeWidth="1.200">
        <path d="M4 9.500L9 4.500L14 9.500" />
        <path d="M29 2H37.500V9H26.500V7M31.500 9V12M28.500 12H35M23.500 1.500H28.500V5.500H23.500ZM25.500 5.500V12" />
        <path d="M44.500 5H46.500L49 2.500V11L46.500 9H44.500Z" />
      </svg>
      <svg className="ml-px" width="9" height="14" viewBox="0 0 9 14" fill="none" stroke="#ddd">
        <path d="M1 4.500Q2.500 7 1 9.500M3.500 3Q6 7 3.500 11M6 1.500Q9.500 7 6 12.500" />
      </svg>
      <span className="ml-[6px] w-[24px] tracking-[-0.300px]">ENG</span>
      <div className="ml-[5px] w-[60px] text-center leading-[16px] tracking-[-0.450px]">
        9:02<br />15.04.2025
      </div>
      <svg className="ml-[9px] mr-[22px]" width="16" height="15" viewBox="0 0 16 15" fill="none" stroke="#fff" strokeWidth="1.200">
        <path d="M1 1H15V11.500H11L8 14L5.500 11.500H1Z" />
      </svg>
    </div>
  );
}

export default function App() {
  return (
    <div className="relative h-[806px] w-[1290px] overflow-hidden font-['Open_Sans',sans-serif]">
      <MainWindow />
      <ExpertDialog />
      <Taskbar />
    </div>
  );
}
